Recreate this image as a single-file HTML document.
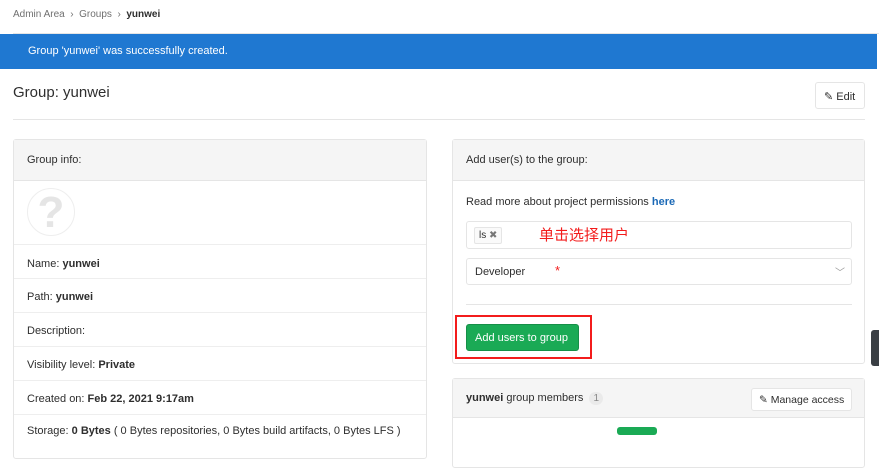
<!DOCTYPE html>
<html><head><meta charset="utf-8"><style>
*{box-sizing:border-box;margin:0;padding:0}
body{width:879px;height:431px;overflow:hidden;background:#fff;font-family:"Liberation Sans","Noto Sans CJK SC",sans-serif;font-size:11px;color:#2e2e2e;position:relative}
.a{position:absolute}
.bc{left:13px;top:9px;font-size:10px;color:#707070}
.bc b{color:#2e2e2e}
.flash{left:0;top:34px;width:877px;height:35px;background:#1f78d1;color:#fff;font-size:11px;padding:11px 0 0 28px}
.title{left:13px;top:84px;font-size:15px;color:#2e2e2e}
.btn{border:1px solid #e5e5e5;border-radius:3px;background:#fff;color:#2e2e2e;font-size:11px;white-space:nowrap}
.panel{border:1px solid #e5e5e5;border-radius:3px;background:#fff}
.ph{background:#f5f5f5;border-bottom:1px solid #e5e5e5;height:41px;padding:14px 13px 0}
.row{position:absolute;left:0;right:0;border-top:1px solid #eee;padding-left:13px;font-size:11px}
b{font-weight:bold}
</style></head><body>
<div class="a bc">Admin Area &nbsp;›&nbsp; Groups &nbsp;›&nbsp; <b>yunwei</b></div>
<div class="a" style="left:13px;top:33px;width:866px;height:1px;background:#e5e5e5"></div>
<div class="a flash">Group 'yunwei' was successfully created.</div>
<div class="a title">Group: yunwei</div>
<div class="a btn" style="left:815px;top:82px;width:50px;height:27px;padding:7px 0 0 8px">✎ Edit</div>
<div class="a" style="left:13px;top:119px;width:852px;height:1px;background:#e5e5e5"></div>

<div class="a panel" style="left:13px;top:139px;width:414px;height:320px">
 <div class="ph">Group info:</div>
 <div class="a" style="left:13px;top:48px;width:48px;height:48px;border-radius:50%;border:1px solid #eee;color:#e5e5e5;font-size:44px;font-weight:bold;text-align:center;line-height:48px">?</div>
 <div class="row" style="top:104px;height:34px;padding-top:13px">Name: <b>yunwei</b></div>
 <div class="row" style="top:138px;height:34px;padding-top:12px">Path: <b>yunwei</b></div>
 <div class="row" style="top:172px;height:34px;padding-top:12px">Description:</div>
 <div class="row" style="top:206px;height:34px;padding-top:12px">Visibility level: <b>Private</b></div>
 <div class="row" style="top:240px;height:34px;padding-top:12px">Created on: <b>Feb 22, 2021 9:17am</b></div>
 <div class="row" style="top:274px;height:34px;padding-top:10px">Storage: <b>0 Bytes</b> ( 0 Bytes repositories, 0 Bytes build artifacts, 0 Bytes LFS )</div>
</div>

<div class="a panel" style="left:452px;top:139px;width:413px;height:225px">
 <div class="ph">Add user(s) to the group:</div>
 <div class="a" style="left:13px;top:56px">Read more about project permissions <b style="color:#1b69b6">here</b></div>
 <div class="a" style="left:13px;top:81px;width:386px;height:28px;border:1px solid #e5e5e5;border-radius:3px">
  <span class="a" style="left:7px;top:5px;border:1px solid #e5e5e5;background:#fafafa;border-radius:2px;padding:2px 4px;font-size:10px">ls <span style="color:#777">✖</span></span>
  <span class="a" style="left:72px;top:2px;color:#f31c1c;font-size:15px">单击选择用户</span>
 </div>
 <div class="a" style="left:13px;top:118px;width:386px;height:27px;border:1px solid #e5e5e5;border-radius:3px;padding:7px 0 0 8px">Developer<span class="a" style="left:88px;top:4px;color:#f31c1c;font-size:13px">*</span><span class="a" style="right:6px;top:5px;color:#999;font-size:10px">﹀</span></div>
 <div class="a" style="left:13px;top:164px;width:386px;height:1px;background:#e5e5e5"></div>
 <div class="a" style="left:2px;top:175px;width:137px;height:44px;border:2px solid #f31c1c"></div>
 <div class="a" style="left:13px;top:184px;width:113px;height:27px;background:#1aaa55;border:1px solid #168f48;border-radius:3px;color:#fff;padding:7px 0 0 8px">Add users to group</div>
</div>

<div class="a panel" style="left:452px;top:378px;width:413px;height:90px">
 <div class="ph" style="height:39px;padding-top:13px"><b>yunwei</b> group members <span style="display:inline-block;background:#eaeaea;color:#888;border-radius:8px;padding:1px 4px;font-size:10px;margin-left:3px">1</span></div>
 <div class="a btn" style="left:298px;top:9px;width:101px;height:23px;padding:5px 0 0 7px;font-size:10.5px">✎ Manage access</div>
 <div class="a" style="left:164px;top:48px;width:40px;height:8px;background:#1aaa55;border-radius:3px"></div>
</div>
<div class="a" style="left:871px;top:330px;width:8px;height:36px;background:#3a3f44;border-radius:3px 0 0 3px"></div>
</body></html>
